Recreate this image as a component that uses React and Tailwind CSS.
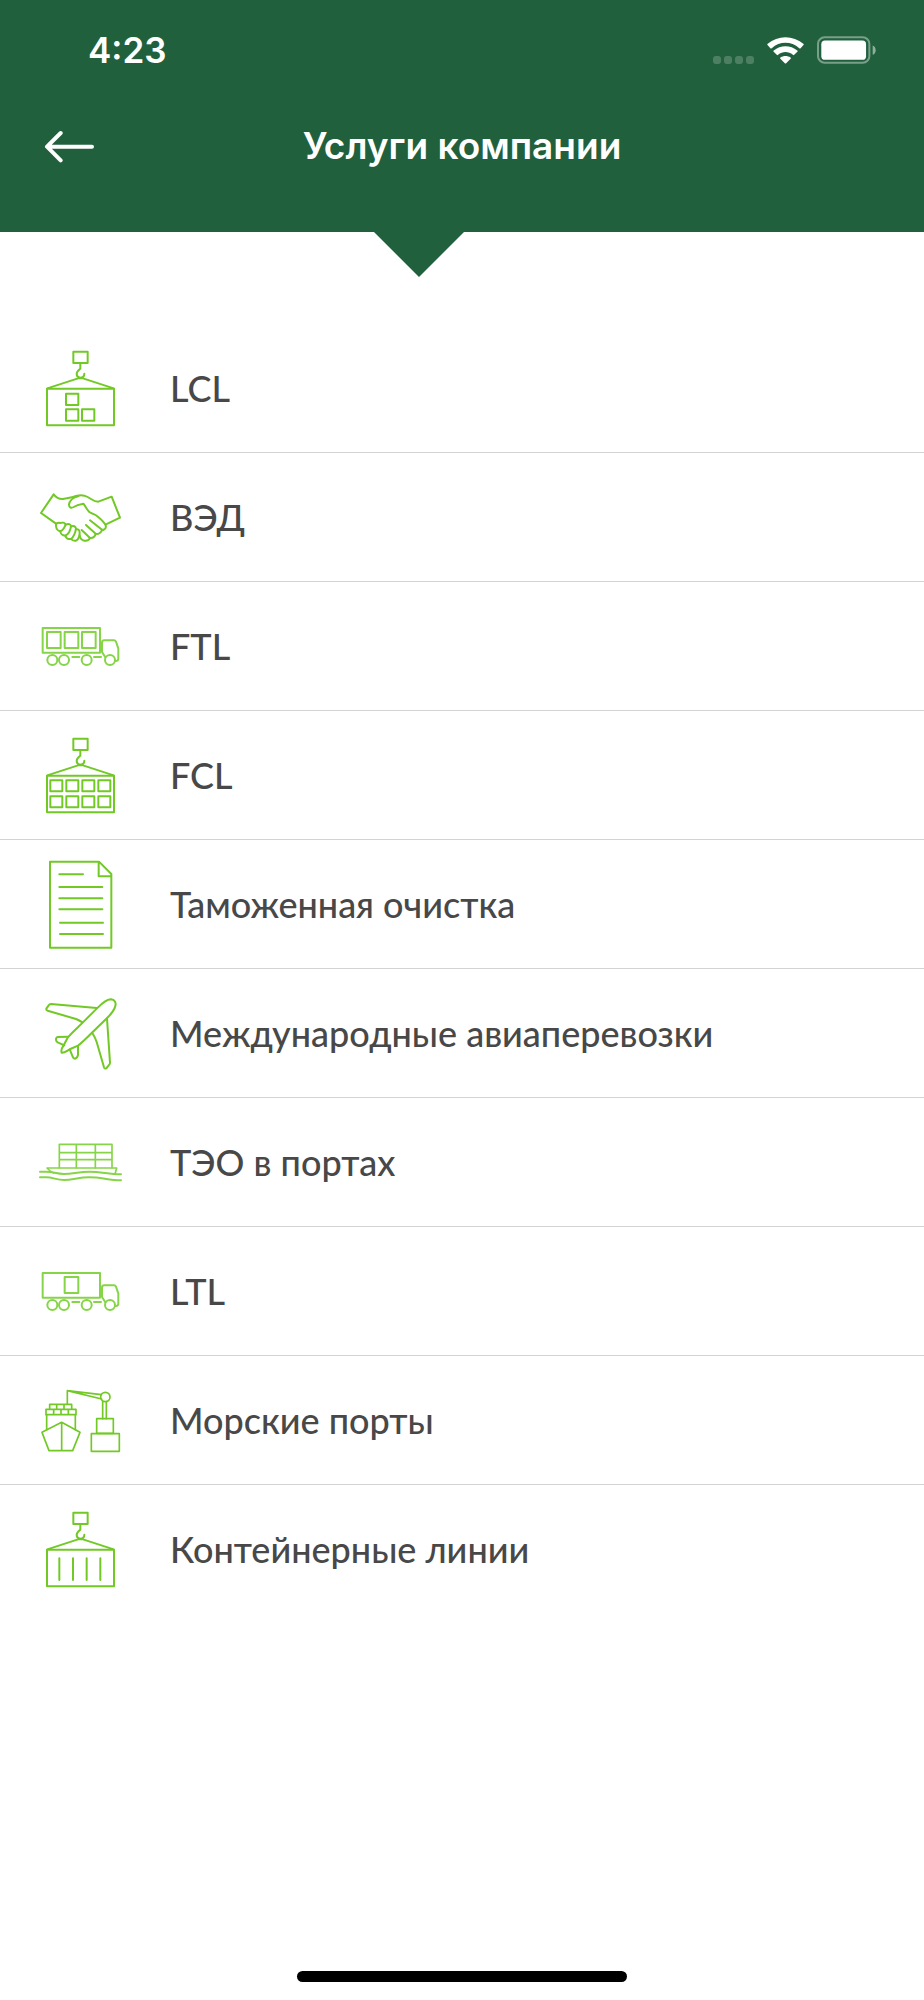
import React from 'react';

const Icon = ({ top, light, children }) => (
    <svg
        viewBox={`48 ${top} 270 288`}
        className={`w-[90px] h-24 shrink-0 ${light ? 'text-[#86d548]' : 'text-[#72c926]'}`}
        fill="none"
        stroke="currentColor"
        strokeWidth="6"
        strokeLinecap="round"
        strokeLinejoin="round"
        aria-hidden="true"
    >
        {children}
    </svg>
);

// Hook, ropes and container outline shared by the three crane icons
const Crane = ({ children }) => (
    <Icon top={19}>
        <rect x="160" y="54" width="43" height="34" />
        <path d="M181 88v17c-6 5-11 9-11 16 0 6 4 10 10 11 8 0 13-4 13-12" />
        <path d="M82 164l92-30h15l92 30" />
        <rect x="81" y="165" width="201" height="110" />
        {children}
    </Icon>
);

const Truck = ({ boxes }) => (
    <Icon top={-3} light>
        <rect x="68" y="87" width="172" height="74" />
        {boxes.map(x => <rect key={x} x={x} y="99" width="41" height="48" />)}
        <path d="M256 175l-10-16v-28q0-7 7-7h29q4 0 6 4l7 21v30q0 6-8 7" />
        <circle cx="97" cy="183" r="15" />
        <circle cx="132" cy="183" r="15" />
        <circle cx="200" cy="183" r="15" />
        <circle cx="270" cy="183" r="15" />
        <path d="M157 174h21M222 174h21" />
    </Icon>
);

const LclIcon = () => (
    <Crane>
        <rect x="138" y="180" width="37" height="34" />
        <rect x="138" y="227" width="37" height="34" />
        <rect x="186" y="227" width="37" height="34" />
    </Crane>
);

const FclIcon = () => (
    <Crane>
        {[91, 139, 187, 235].map(x => (
            <React.Fragment key={x}>
                <rect x={x} y="179" width="36" height="33" />
                <rect x={x} y="227" width="36" height="33" />
            </React.Fragment>
        ))}
    </Crane>
);

const ContainerIcon = () => (
    <Crane>
        <path d="M118 191v65M159 191v65M200 191v65M241 191v65" />
    </Crane>
);

const HandshakeIcon = () => (
    <Icon top={0}>
        <path d="M108 164L63 132l38-56q11 15 28 14l46-9" />
        <path d="M160 84q16-7 33-4 10 3 20 10 12 8 22 8l40-15 25 63-42 20" />
        <path d="M175 81c-16 4-27 15-28 26 0 9 7 11 14 7 9-6 18-8 29-10 7 8 10 17 18 25 8 6 16 6 24 13 12 10 20 17 25 27 2 8-2 13-9 14" />
        <path d="M121 162c-9-2-15 2-13 9 1 8 5 15 13 16 6-2 12-10 16-20-2-6-10-7-16-5z" />
        <path d="M137 167c8-4 15-2 16 5-2 13-8 24-17 28-9 0-15-6-15-13" />
        <path d="M153 172c8-3 14 0 15 7-2 13-7 25-15 31-8 1-15-3-17-10" />
        <path d="M168 181c7-2 11 3 11 10 0 10-4 20-11 24-7 1-12-1-15-5" />
        <path d="M179 199c1 8 6 14 14 16 8 1 15-3 17-8l-25-24" />
        <path d="M210 207c8 1 16-4 17-13l-29-26" />
        <path d="M227 195c9 1 18-5 19-13l-36-28" />
        <path d="M246 182h4" />
    </Icon>
);

const DocumentIcon = () => (
    <Icon top={48}>
        <path d="M90 65h147l37 37v221H90zM236 65v44h38" />
        <path d="M118 103h71M118 141h129M118 175h129M118 208h129M120 248h129M120 282h129" />
    </Icon>
);

const PlaneIcon = () => (
    <Icon top={14}>
        <path d="M125 217c-3-8 0-14 6-22l12-23c12-15 29-29 45-45l43-43c14-14 29-27 42-27 11 1 16 9 13 20-3 13-13 25-27 38l-44 43c-14 14-29 29-41 38l-23 10c-10 5-17 12-26 11z" />
        <path d="M230 83L93 71q-5 0-7 4l-7 10q-1 4 4 6l85 25q10 4 19 10" />
        <path d="M261 115l9 132q0 4-4 8l-7 9q-5 2-7-3l-22-76q-4-13-13-27" />
        <path d="M142 169l-29 1q-5 1-5 8 0 5 5 8l20 9" />
        <path d="M174 198v26q-2 9-9 11-5 0-7-6l-8-20" />
    </Icon>
);

const BargeIcon = () => (
    <Icon top={-19} light>
        <path d="M118 142V72h158v70M118 97h158M118 118h158M169 72v70M226 72v70" strokeWidth="5" />
        <path d="M101 158c-9-2-13-8-20-15h209l-5 18" strokeWidth="5" />
        <path d="M60 154h18c22 0 31 7 54 7 26 0 44-7 76-7 37 0 57 8 95 8" />
        <path d="M60 171h18c22 0 31 8 54 8 26 0 44-8 76-8 37 0 57 9 95 9" />
    </Icon>
);

const PortIcon = () => (
    <Icon top={2}>
        <g strokeWidth="5">
            <path d="M142 98V58l102 12M142 58l103 25M248 91v51M259 91v51" />
            <circle cx="256" cy="77" r="14" />
            <rect x="230" y="142" width="50" height="44" />
            <rect x="214" y="187" width="84" height="53" />
            <path d="M89 113v-14h66v14M110 99v14M132 99v14" />
            <path d="M78 130v-16h90v16zM101 114v16M123 114v16M145 114v16" />
            <path d="M80 130v45M166 130v45" />
            <path d="M87 238l-21-55 59-30 55 30-22 55zM125 153v85" />
        </g>
    </Icon>
);

const services = [
    { id: 'lcl', label: 'LCL', icon: <LclIcon /> },
    { id: 'ved', label: 'ВЭД', icon: <HandshakeIcon /> },
    { id: 'ftl', label: 'FTL', icon: <Truck boxes={[81, 134, 186]} /> },
    { id: 'fcl', label: 'FCL', icon: <FclIcon /> },
    { id: 'customs', label: 'Таможенная очистка', icon: <DocumentIcon /> },
    { id: 'air', label: 'Международные авиаперевозки', icon: <PlaneIcon /> },
    { id: 'teo', label: 'ТЭО в портах', icon: <BargeIcon /> },
    { id: 'ltl', label: 'LTL', icon: <Truck boxes={[134]} /> },
    { id: 'ports', label: 'Морские порты', icon: <PortIcon /> },
    { id: 'lines', label: 'Контейнерные линии', icon: <ContainerIcon /> },
];

const StatusBar = () => (
    <div className="h-[100px] pl-[88px] pr-12 flex items-center justify-between">
        <span className="text-[35px] leading-none font-semibold">4:23</span>
        <div className="flex items-center gap-[13px]">
            <div className="flex gap-[3px] h-[27px] items-end">
                <span className="size-2 rounded-[3px] bg-white/20" />
                <span className="size-2 rounded-[3px] bg-white/20" />
                <span className="size-2 rounded-[3px] bg-white/20" />
                <span className="size-2 rounded-[3px] bg-white/20" />
            </div>
            <svg viewBox="917 110 110 80" className="w-[37px] h-[27px]" fill="currentColor" aria-hidden="true">
                <path d="M918 133q-1-1 1-3c30-26 76-26 106 0q2 2 1 3l-9 10q-2 2-4 0c-24-21-58-21-82 0q-2 2-4 0z" />
                <path d="M936 153q-1-1 1-3c20-17 50-17 70 0q2 2 1 3l-10 10q-2 2-4 0c-13-11-31-11-44 0q-2 2-4 0z" />
                <path d="M956 174q-1-2 1-3c9-6 21-6 30 0q2 1 1 3l-14 14q-2 2-4 0z" />
            </svg>
            <svg viewBox="1064 109 178 83" className="w-[59px] h-7" aria-hidden="true">
                <rect x="1067" y="112" width="155" height="77" rx="20" fill="none" stroke="currentColor" strokeOpacity="0.4" strokeWidth="6" />
                <rect x="1077" y="122" width="135" height="58" rx="11" fill="currentColor" />
                <path d="M1232 137c12 4 12 24 0 28z" fill="currentColor" fillOpacity="0.5" />
            </svg>
        </div>
    </div>
);

const Header = () => (
    <header className="relative bg-[#21603d] text-white font-['Inter',sans-serif] pb-10">
        <StatusBar />
        <div className="h-23 px-11 grid grid-cols-[1fr_auto_1fr] items-center">
            <button type="button" aria-label="Назад" className="justify-self-start">
                <svg viewBox="131 390 153 99" className="w-[51px] h-[33px]" fill="none" stroke="currentColor" strokeWidth="12" strokeLinecap="round" strokeLinejoin="round" aria-hidden="true">
                    <path d="M275 440H141M181 399l-41 41 41 41" />
                </svg>
            </button>
            <h1 className="text-[37px] leading-10 font-semibold">Услуги компании</h1>
        </div>
        <svg viewBox="0 0 90 45" className="absolute top-full left-1/2 -ml-22 w-[90px] h-[45px] text-[#21603d]" fill="currentColor" aria-hidden="true">
            <path d="M0 0h90L45 45z" />
        </svg>
    </header>
);

const App = () => {
    return (
        <div className="min-h-screen bg-white flex flex-col">
            <Header />
            <main className="pt-23">
                <ul className="divide-y divide-[#d3d3d6]">
                    {services.map(service => (
                        <li key={service.id}>
                            <a href={`#${service.id}`} className="h-32 px-9 flex items-center gap-11 text-[#484848]">
                                {service.icon}
                                <span className="text-[36px] leading-none font-medium font-['Lato',sans-serif]">{service.label}</span>
                            </a>
                        </li>
                    ))}
                </ul>
            </main>
            <div className="mt-auto pb-[18px] flex justify-center">
                <div className="w-[330px] h-[11px] rounded-full bg-black" />
            </div>
        </div>
    );
};

export default App;
